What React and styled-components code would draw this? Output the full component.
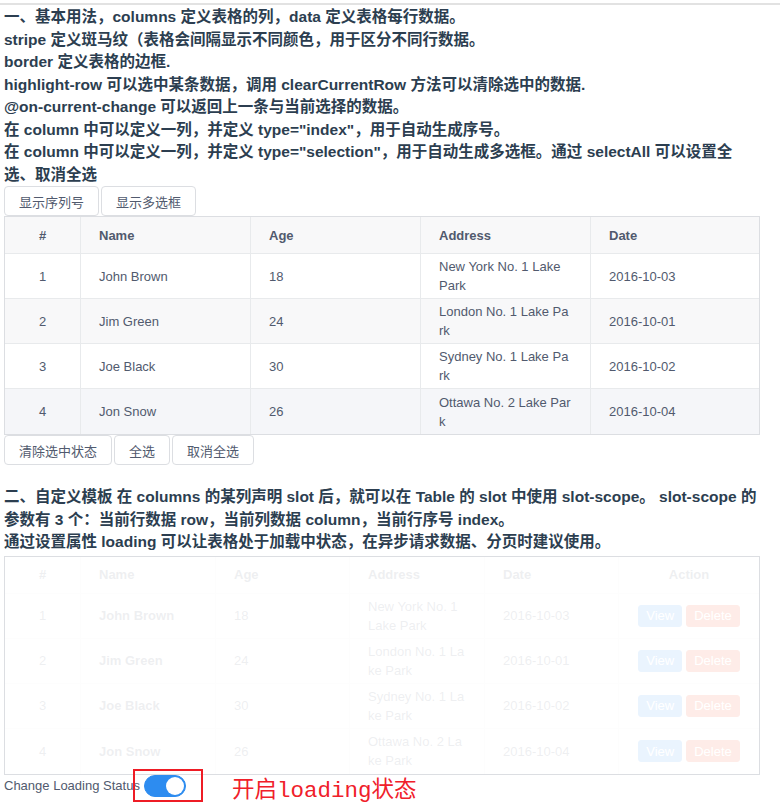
import React, { useState } from "react";
import styled, { createGlobalStyle } from "styled-components";

const GlobalStyle = createGlobalStyle`
  body {
    margin: 0;
    background: #fff;
    font-family: "Liberation Sans", "Noto Sans CJK SC", sans-serif;
  }
`;

const data = [
  { name: "John Brown", age: 18, address: "New York No. 1 Lake Park", date: "2016-10-03" },
  { name: "Jim Green", age: 24, address: "London No. 1 Lake Park", date: "2016-10-01" },
  { name: "Joe Black", age: 30, address: "Sydney No. 1 Lake Park", date: "2016-10-02" },
  { name: "Jon Snow", age: 26, address: "Ottawa No. 2 Lake Park", date: "2016-10-04" },
];

const stripes = ["#fff", "#f8f8f9", "#fff", "#f5f6f9"];

const App = () => {
  const [loading, setLoading] = useState(true);

  return (
    <Page>
      <GlobalStyle />
      <Divider />
      <Content>
        <Intro>
          一、基本用法，columns 定义表格的列，data 定义表格每行数据。
          <br />
          stripe 定义斑马纹（表格会间隔显示不同颜色，用于区分不同行数据。
          <br />
          border 定义表格的边框.
          <br />
          highlight-row 可以选中某条数据，调用 clearCurrentRow 方法可以清除选中的数据.
          <br />
          @on-current-change 可以返回上一条与当前选择的数据。
          <br />
          在 column 中可以定义一列，并定义 type="index"，用于自动生成序号。
          <br />
          在 column 中可以定义一列，并定义 type="selection"，用于自动生成多选框。通过 selectAll 可以设置全
          <br />
          选、取消全选
        </Intro>

        <ButtonRow>
          <Button>显示序列号</Button>
          <Button>显示多选框</Button>
        </ButtonRow>

        <TableWrap>
          <Table>
            <colgroup>
              <col width="76" />
              <col width="170" />
              <col width="170" />
              <col width="170" />
              <col width="168" />
            </colgroup>
            <thead>
              <tr>
                <Th $center>#</Th>
                <Th>Name</Th>
                <Th>Age</Th>
                <Th>Address</Th>
                <Th>Date</Th>
              </tr>
            </thead>
            <tbody>
              {data.map((row, i) => (
                <Tr key={row.name} $bg={stripes[i]}>
                  <Td $center>{i + 1}</Td>
                  <Td>{row.name}</Td>
                  <Td>{row.age}</Td>
                  <Td>{row.address}</Td>
                  <Td>{row.date}</Td>
                </Tr>
              ))}
            </tbody>
          </Table>
        </TableWrap>

        <ButtonRow>
          <Button>清除选中状态</Button>
          <Button>全选</Button>
          <Button>取消全选</Button>
        </ButtonRow>

        <Intro $top={20}>
          二、自定义模板 在 columns 的某列声明 slot 后，就可以在 Table 的 slot 中使用 slot-scope。 slot-scope 的
          <br />
          参数有 3 个：当前行数据 row，当前列数据 column，当前行序号 index。
          <br />
          通过设置属性 loading 可以让表格处于加载中状态，在异步请求数据、分页时建议使用。
        </Intro>

        <TableWrap $top={2}>
          <Table>
            <colgroup>
              <col width="76" />
              <col width="135" />
              <col width="134" />
              <col width="135" />
              <col width="134" />
              <col width="140" />
            </colgroup>
            <thead>
              <tr>
                <Th $center>#</Th>
                <Th>Name</Th>
                <Th>Age</Th>
                <Th>Address</Th>
                <Th>Date</Th>
                <Th $center>Action</Th>
              </tr>
            </thead>
            <tbody>
              {data.map((row, i) => (
                <Tr key={row.name} $bg="#fff">
                  <Td $center>{i + 1}</Td>
                  <Td>
                    <strong>{row.name}</strong>
                  </Td>
                  <Td>{row.age}</Td>
                  <Td>{row.address}</Td>
                  <Td>{row.date}</Td>
                  <ActionCell>
                    <SmallButton $color="#2d8cf0">View</SmallButton>
                    <SmallButton $color="#ed4014">Delete</SmallButton>
                  </ActionCell>
                </Tr>
              ))}
            </tbody>
          </Table>
          {loading && <LoadingMask />}
        </TableWrap>

        <Footer>
          <Label>Change Loading Status</Label>
          <SwitchWrap>
            <Switch $on={loading} onClick={() => setLoading(!loading)}>
              <Knob $on={loading} />
            </Switch>
            <RedBox />
          </SwitchWrap>
          <Note>开启loading状态</Note>
        </Footer>
      </Content>
    </Page>
  );
};

export default App;

const Page = styled.div`
  width: 780px;
  padding-top: 3px;
`;

const Divider = styled.div`
  height: 2px;
  background: #e2e2e2;
`;

const Content = styled.div`
  width: 756px;
  padding-left: 4px;
`;

const Intro = styled.p`
  margin: ${(p) => p.$top || 0}px 0 0;
  padding-top: 1px;
  font-size: 15.5px;
  font-weight: bold;
  line-height: 22.5px;
  color: #2c3e50;
  white-space: nowrap;
`;

const ButtonRow = styled.div`
  display: flex;
  gap: 2px;
  height: 30px;
`;

const Button = styled.button`
  height: 30px;
  padding: 0 14px;
  background: #fff;
  border: 1px solid #dcdee2;
  border-radius: 4px;
  font-family: "Liberation Sans", "Noto Sans CJK SC", sans-serif;
  font-size: 13px;
  color: #515a6e;
  cursor: pointer;
`;

const TableWrap = styled.div`
  position: relative;
  margin-top: ${(p) => p.$top || 0}px;
  border: 1px solid #dcdee2;
`;

const Table = styled.table`
  width: 754px;
  table-layout: fixed;
  border-collapse: separate;
  border-spacing: 0;
  font-size: 13px;
  color: #515a6e;
`;

const Th = styled.th`
  height: 37px;
  padding: 0 18px;
  box-sizing: border-box;
  background: #f8f8f9;
  border-right: 1px solid #e8eaec;
  border-bottom: 1px solid #e8eaec;
  font-weight: bold;
  text-align: ${(p) => (p.$center ? "center" : "left")};
  &:last-child {
    border-right: none;
  }
`;

const Tr = styled.tr`
  height: 45px;
  background: ${(p) => p.$bg};
  &:last-child td {
    border-bottom: none;
  }
`;

const Td = styled.td`
  padding: 0 18px;
  box-sizing: border-box;
  border-right: 1px solid #e8eaec;
  border-bottom: 1px solid #e8eaec;
  line-height: 19px;
  word-break: break-all;
  text-align: ${(p) => (p.$center ? "center" : "left")};
  &:last-child {
    border-right: none;
  }
`;

const ActionCell = styled(Td)`
  padding: 0;
  text-align: center;
  white-space: nowrap;
  word-break: normal;
`;

const SmallButton = styled.button`
  height: 22px;
  padding: 0 7px;
  margin: 0 2px;
  background: ${(p) => p.$color};
  border: 1px solid ${(p) => p.$color};
  border-radius: 3px;
  font-family: "Liberation Sans", sans-serif;
  font-size: 13px;
  color: #fff;
  vertical-align: middle;
`;

const LoadingMask = styled.div`
  position: absolute;
  inset: 0;
  background: rgba(255, 255, 255, 0.9);
`;

const Footer = styled.div`
  display: flex;
  align-items: flex-start;
`;

const Label = styled.span`
  font-size: 13px;
  line-height: 22px;
  color: #515a6e;
`;

const SwitchWrap = styled.div`
  position: relative;
  margin-left: 4px;
  height: 22px;
`;

const Switch = styled.span`
  display: block;
  position: relative;
  width: 42px;
  height: 22px;
  box-sizing: border-box;
  border-radius: 11px;
  border: 1px solid ${(p) => (p.$on ? "#2d8cf0" : "#ccc")};
  background: ${(p) => (p.$on ? "#2d8cf0" : "#ccc")};
  cursor: pointer;
`;

const Knob = styled.span`
  position: absolute;
  top: 1px;
  left: ${(p) => (p.$on ? "21px" : "1px")};
  width: 18px;
  height: 18px;
  border-radius: 50%;
  background: #fff;
`;

const RedBox = styled.div`
  position: absolute;
  left: -11px;
  top: -6px;
  width: 70px;
  height: 33px;
  box-sizing: border-box;
  border: 2px solid #ee1c25;
  pointer-events: none;
`;

const Note = styled.span`
  margin: 5px 0 0 46px;
  font-family: "Liberation Mono", "Noto Sans CJK SC", monospace;
  font-size: 22.5px;
  line-height: 22px;
  color: #f0202a;
`;
